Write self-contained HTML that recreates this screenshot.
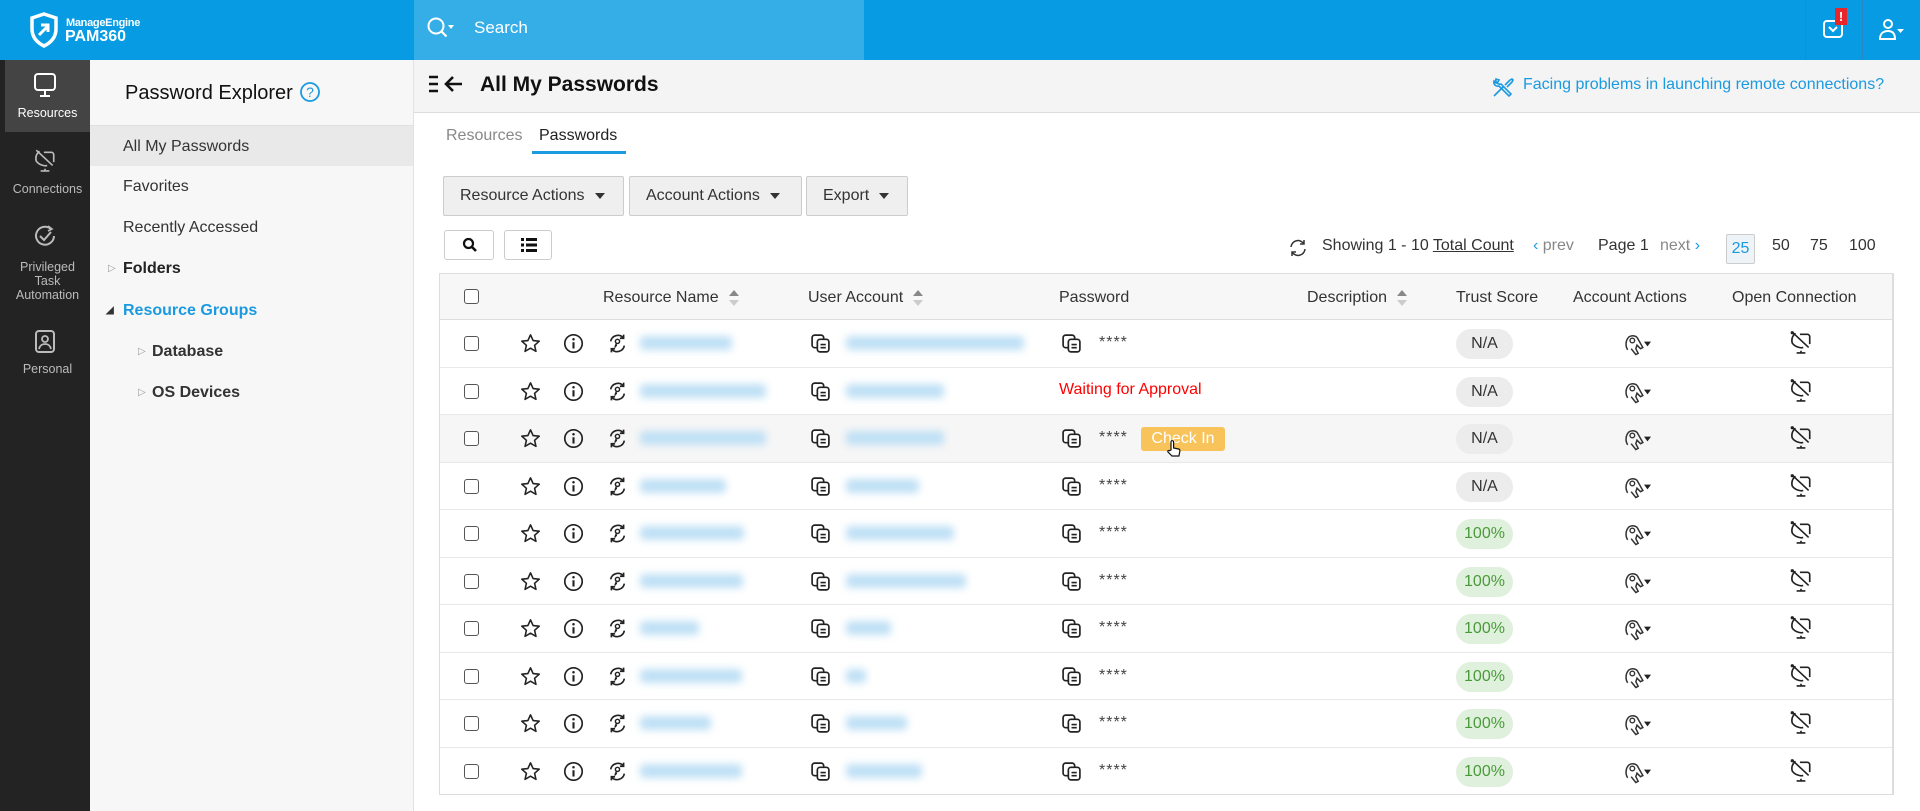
<!DOCTYPE html>
<html><head><meta charset="utf-8"><style>
*{box-sizing:border-box;margin:0;padding:0}
body{width:1920px;height:811px;overflow:hidden;font-family:"Liberation Sans",sans-serif;color:#222;background:#fff;position:relative}
.a{position:absolute}
#hdr{left:0;top:0;width:1920px;height:60px;background:#069be3}
#srch{left:414px;top:0;width:450px;height:60px;background:#35aee8;color:#fff;font-size:17px}
#nav{left:0;top:60px;width:90px;height:751px;background:#232323}
.ni{position:absolute;left:5px;width:85px;text-align:center;color:#bbb;font-size:12.5px;line-height:14px}
#sec{left:90px;top:60px;width:324px;height:751px;background:#f7f7f7;border-right:1px solid #e2e2e2}
.si{position:absolute;left:0;width:323px;height:41px;line-height:41px;padding-left:33px;font-size:16px;color:#333}
#mh{left:414px;top:60px;width:1506px;height:53px;background:#f4f4f4;border-bottom:1px solid #ddd}
.btn{position:absolute;top:176px;height:40px;background:#efefef;border:1px solid #ccc;border-radius:2px;font-size:16px;color:#333;line-height:38px;padding-left:16px}
.caret{display:inline-block;width:0;height:0;border-left:5px solid transparent;border-right:5px solid transparent;border-top:6px solid #333;margin-left:10px;vertical-align:middle}
.sb{position:absolute;top:230px;height:30px;border:1px solid #ccc;border-radius:3px;background:#fff}
#tbl{left:439px;top:273px;width:1455px;height:522px;border:1px solid #ddd;border-right:2px solid #ddd}
.th{position:absolute;top:0;left:0;width:1452px;height:46px;background:#f7f7f7;border-bottom:1px solid #ddd;font-size:16px;color:#333}
.th span{position:absolute;top:15px}
.row{position:absolute;left:0;width:1452px;height:47.5px;border-bottom:1px solid #e8e8e8}
.row>*{position:absolute}
.cb{left:24px;top:16px;width:15px;height:15px;border:1.5px solid #555;border-radius:3px;background:#fff}
.bl{top:16px;height:14px;background:#bfe0f5;filter:blur(4px);border-radius:4px}
.pw{left:659px;top:14px;font-size:16px;color:#444;letter-spacing:1px}
.bd{left:1016px;top:9px;width:57px;height:30px;border-radius:15px;background:#ececec;text-align:center;line-height:30px;font-size:16px;color:#333}
.bd.g{background:#dff1dc;color:#4a9a3a}
.k{left:1183px;top:12px}
.c{left:1349px;top:10px}
.sort{display:inline-block;position:relative;width:10px;height:16px;vertical-align:middle;margin-left:10px}
.sort:before{content:"";position:absolute;top:0;left:0;border-left:5px solid transparent;border-right:5px solid transparent;border-bottom:6px solid #888}
.sort:after{content:"";position:absolute;bottom:0;left:0;border-left:5px solid transparent;border-right:5px solid transparent;border-top:6px solid #ccc}
</style></head><body>
<svg width="0" height="0" style="position:absolute"><defs>
<symbol id="star" viewBox="0 0 20 20"><path d="M10 1.8l2.5 5.4 5.8.6-4.4 3.9 1.3 5.8L10 14.5l-5.2 3 1.3-5.8L1.7 7.8l5.8-.6z" fill="none" stroke="#222" stroke-width="1.5" stroke-linejoin="round"/></symbol>
<symbol id="info" viewBox="0 0 20 20"><circle cx="10" cy="10" r="8.3" fill="none" stroke="#222" stroke-width="1.6"/><circle cx="10" cy="6" r="1.2" fill="#222"/><path d="M10 8.8v6" stroke="#222" stroke-width="2"/></symbol>
<symbol id="sync" viewBox="0 0 20 20"><path d="M3.5 8a7 7 0 0 1 12-3.5M16.5 12a7 7 0 0 1-12 3.5" fill="none" stroke="#222" stroke-width="1.6"/><path d="M15.8 1.5v3.5h-3.5M4.2 18.5V15h3.5" fill="none" stroke="#222" stroke-width="1.6"/><circle cx="10" cy="8" r="2" fill="none" stroke="#222" stroke-width="1.4"/><path d="M9 9.8l-1.5 4M8 12h1.5" stroke="#222" stroke-width="1.4"/></symbol>
<symbol id="copy" viewBox="0 0 20 20"><rect x="2" y="2" width="11" height="12" rx="2.5" fill="#fff" stroke="#222" stroke-width="1.6"/><rect x="7" y="6" width="11" height="12" rx="2.5" fill="#fff" stroke="#222" stroke-width="1.6"/><path d="M10 11h5M10 14h5" stroke="#222" stroke-width="1.5"/></symbol>
<symbol id="key" viewBox="0 0 24 20"><path d="M4 15c-2-3-2-8 1-11 3-2 7-1 8 2l4 7-2 1-3-3-1 3 2 4-2 1-4-5" fill="none" stroke="#333" stroke-width="1.3"/><circle cx="8" cy="7" r="2" fill="none" stroke="#333" stroke-width="1.2"/><path d="M18 8h6l-3 4z" fill="#222"/></symbol>
<symbol id="conn" viewBox="0 0 22 22"><path d="M3 2l15 14M6 3c-3 2-4 6-3 9 2 3 7 5 10 4" fill="none" stroke="#222" stroke-width="1.5"/><path d="M10 4h7c1 0 2 1 2 2v7M11 19v2M7 21h8" fill="none" stroke="#222" stroke-width="1.5"/><circle cx="3" cy="2.5" r="1.5" fill="#222"/></symbol>
</defs></svg>

<div id="hdr" class="a">
 <svg class="a" style="left:28px;top:12px" width="32" height="36" viewBox="0 0 32 36"><path d="M16 2l12 4v11c0 9-6 14-12 17C10 31 4 26 4 17V6z" fill="none" stroke="#fff" stroke-width="3.5"/><path d="M11 23l9-9M13 13h7v7" fill="none" stroke="#fff" stroke-width="3"/></svg>
 <div class="a" style="left:66px;top:17px;color:#fff;font-size:11px;font-weight:bold;letter-spacing:-0.3px">ManageEngine</div>
 <div class="a" style="left:65px;top:28px;color:#fff;font-size:16px;font-weight:bold">PAM360</div>
</div>
<div id="srch" class="a">
 <svg class="a" style="left:12px;top:16px" width="30" height="26" viewBox="0 0 30 26"><circle cx="10" cy="10" r="7.5" fill="none" stroke="#fff" stroke-width="2"/><path d="M15.5 15.5l5 5" stroke="#fff" stroke-width="2.2"/><path d="M22 9h6l-3 4z" fill="#fff"/></svg>
 <span class="a" style="left:60px;top:18px">Search</span>
</div>
<div class="a" style="left:1805px;top:0;width:1px;height:60px;background:#2a87c4"></div>
<div class="a" style="left:1862px;top:0;width:1px;height:60px;background:#2a87c4"></div>
<svg class="a" style="left:1822px;top:15px" width="22" height="24" viewBox="0 0 22 24"><rect x="2" y="6" width="18" height="16" rx="3" fill="none" stroke="#fff" stroke-width="2"/><path d="M7 12l4 4 4-4" fill="none" stroke="#fff" stroke-width="2"/></svg>
<div class="a" style="left:1835px;top:8px;width:12px;height:17px;background:#e8262a;color:#fff;font-size:13px;font-weight:bold;text-align:center;line-height:17px">!</div>
<svg class="a" style="left:1878px;top:18px" width="28" height="24" viewBox="0 0 28 24"><circle cx="10" cy="6" r="4" fill="none" stroke="#fff" stroke-width="2"/><path d="M2 21c0-5 3-8 8-8s7 3 7 8z" fill="none" stroke="#fff" stroke-width="2"/><path d="M19 11h7l-3.5 4z" fill="#fff"/></svg>

<div id="nav" class="a">
 <div class="a" style="left:5px;top:0;width:85px;height:72px;background:#444"></div>
 <svg class="a" style="left:33px;top:12px" width="24" height="26" viewBox="0 0 24 26"><rect x="2" y="2" width="20" height="16" rx="3" fill="none" stroke="#fff" stroke-width="2"/><path d="M12 18v5M7 24h10" stroke="#fff" stroke-width="2"/></svg>
 <div class="ni" style="top:46px;color:#fff">Resources</div>
 <svg class="a" style="left:33px;top:87px" width="24" height="26" viewBox="0 0 22 22"><path d="M3 2l15 14M6 3c-3 2-4 6-3 9 2 3 7 5 10 4" fill="none" stroke="#bbb" stroke-width="1.5"/><path d="M10 4h7c1 0 2 1 2 2v7M11 19v2M7 21h8" fill="none" stroke="#bbb" stroke-width="1.5"/></svg>
 <div class="ni" style="top:122px">Connections</div>
 <svg class="a" style="left:33px;top:163px" width="24" height="26" viewBox="0 0 24 26"><path d="M18 6A9 9 0 1 0 21 13" fill="none" stroke="#bbb" stroke-width="2"/><path d="M7 13l4 4 7-8" fill="none" stroke="#bbb" stroke-width="2"/><path d="M15 3l4 3-4 2" fill="none" stroke="#bbb" stroke-width="1.6"/></svg>
 <div class="ni" style="top:200px">Privileged<br>Task<br>Automation</div>
 <svg class="a" style="left:33px;top:268px" width="24" height="26" viewBox="0 0 24 26"><rect x="3" y="3" width="18" height="21" rx="3" fill="none" stroke="#bbb" stroke-width="2"/><circle cx="12" cy="11" r="3" fill="none" stroke="#bbb" stroke-width="1.8"/><path d="M6 21c1-4 3-5 6-5s5 1 6 5" fill="none" stroke="#bbb" stroke-width="1.8"/></svg>
 <div class="ni" style="top:302px">Personal</div>
</div>

<div id="sec" class="a">
 <div class="a" style="left:35px;top:22px;font-size:20px;color:#111">Password Explorer</div>
 <svg class="a" style="left:209px;top:21px" width="22" height="22" viewBox="0 0 22 22"><circle cx="11" cy="11" r="9" fill="none" stroke="#1a9ae0" stroke-width="1.8"/><text x="11" y="16" text-anchor="middle" font-size="14" fill="#1a9ae0" font-family="Liberation Sans">?</text></svg>
 <div class="si" style="top:65px;background:#e9e9e9;border-top:1px solid #e0e0e0">All My Passwords</div>
 <div class="si" style="top:106px">Favorites</div>
 <div class="si" style="top:147px">Recently Accessed</div>
 <div class="si" style="top:188px;font-weight:bold;color:#222"><span style="position:absolute;left:18px;color:#999;font-size:10px;font-weight:normal">&#9655;</span>Folders</div>
 <div class="si" style="top:230px;font-weight:bold;color:#1a9ae0"><span style="position:absolute;left:16px;color:#333;font-size:10px">&#9698;</span>Resource Groups</div>
 <div class="si" style="top:271px;padding-left:62px;font-weight:bold;color:#333"><span style="position:absolute;left:48px;color:#999;font-size:10px;font-weight:normal">&#9655;</span>Database</div>
 <div class="si" style="top:312px;padding-left:62px;font-weight:bold;color:#333"><span style="position:absolute;left:48px;color:#999;font-size:10px;font-weight:normal">&#9655;</span>OS Devices</div>
</div>

<div id="mh" class="a">
 <svg class="a" style="left:14px;top:14px" width="42" height="22" viewBox="0 0 42 22"><path d="M1 3h9M1 10h9M1 17h9" stroke="#111" stroke-width="2.6"/><path d="M34 10H18M25 3l-7 7 7 7" fill="none" stroke="#111" stroke-width="2.6"/></svg>
 <div class="a" style="left:66px;top:13px;font-size:21px;font-weight:bold;color:#111">All My Passwords</div>
 <svg class="a" style="left:1077px;top:15px" width="24" height="24" viewBox="0 0 24 24"><path d="M3 21l9-9M5 4a4 4 0 0 0 5 5l10 10-2 2L8 11a4 4 0 0 1-5-5l2 2 2-1 1-2z" fill="none" stroke="#1a9ae0" stroke-width="1.6"/><path d="M14 10l5-5 2-1 1 1-1 2-5 5" fill="none" stroke="#1a9ae0" stroke-width="1.6"/></svg>
 <div class="a" style="left:1109px;top:16px;font-size:16px;color:#1a9ae0">Facing problems in launching remote connections?</div>
</div>

<div class="a" style="left:446px;top:127px;font-size:16px;color:#888">Resources</div>
<div class="a" style="left:539px;top:127px;font-size:16px;color:#222">Passwords</div>
<div class="a" style="left:532px;top:151px;width:94px;height:3px;background:#1a9ae0"></div>

<div class="btn" style="left:443px;width:181px">Resource Actions<span class="caret"></span></div>
<div class="btn" style="left:629px;width:173px">Account Actions<span class="caret"></span></div>
<div class="btn" style="left:806px;width:102px">Export<span class="caret"></span></div>
<div class="sb" style="left:444px;width:50px"><svg class="a" style="left:17px;top:6px" width="16" height="16" viewBox="0 0 16 16"><circle cx="6.5" cy="6.5" r="4.5" fill="none" stroke="#111" stroke-width="2.2"/><path d="M10 10l4 4" stroke="#111" stroke-width="2.6"/></svg></div>
<div class="sb" style="left:504px;width:48px"><svg class="a" style="left:16px;top:7px" width="16" height="14" viewBox="0 0 16 14"><path d="M0 1.5h3M5 1.5h11M0 7h3M5 7h11M0 12.5h3M5 12.5h11" stroke="#111" stroke-width="3"/></svg></div>

<svg class="a" style="left:1288px;top:238px" width="20" height="20" viewBox="0 0 20 20"><path d="M3 9a7 7 0 0 1 13-3M17 11a7 7 0 0 1-13 3" fill="none" stroke="#333" stroke-width="1.5"/><path d="M16 2v4h-4M4 18v-4h4" fill="none" stroke="#333" stroke-width="1.5"/></svg>
<div class="a" style="left:1322px;top:237px;font-size:16px;color:#333">Showing 1 - 10 <span style="text-decoration:underline">Total Count</span></div>
<div class="a" style="left:1533px;top:237px;font-size:16px;color:#888"><span style="color:#1a9ae0">&#8249;</span> prev</div>
<div class="a" style="left:1598px;top:237px;font-size:16px;color:#333">Page 1</div>
<div class="a" style="left:1660px;top:237px;font-size:16px;color:#888">next <span style="color:#1a9ae0">&#8250;</span></div>
<div class="a" style="left:1726px;top:234px;width:29px;height:30px;border:1px solid #ccc;background:#eef3f7;border-radius:2px;color:#1a9ae0;font-size:16px;text-align:center;line-height:28px">25</div>
<div class="a" style="left:1772px;top:237px;font-size:16px;color:#333">50</div>
<div class="a" style="left:1810px;top:237px;font-size:16px;color:#333">75</div>
<div class="a" style="left:1849px;top:237px;font-size:16px;color:#333">100</div>

<div id="tbl" class="a">
 <div class="th">
  <div class="cb" style="top:15px;left:24px;position:absolute"></div>
  <span style="left:163px">Resource Name<i class="sort"></i></span>
  <span style="left:368px">User Account<i class="sort"></i></span>
  <span style="left:619px">Password</span>
  <span style="left:867px">Description<i class="sort"></i></span>
  <span style="left:1016px">Trust Score</span>
  <span style="left:1133px">Account Actions</span>
  <span style="left:1292px">Open Connection</span>
 </div>
 <div style="position:absolute;top:46px;left:0;width:1452px">
 <div class="row" style="top:0"><div class="cb"></div><svg style="left:80px;top:13px" width="21" height="21"><use href="#star"/></svg><svg style="left:123px;top:13px" width="21" height="21"><use href="#info"/></svg><svg style="left:167px;top:13px" width="21" height="21"><use href="#sync"/></svg><div class="bl" style="left:200px;width:92px"></div><svg style="left:370px;top:13px" width="21" height="21"><use href="#copy"/></svg><div class="bl" style="left:406px;width:178px"></div><svg style="left:621px;top:13px" width="21" height="21"><use href="#copy"/></svg><div class="pw">****</div><div class="bd">N/A</div><svg class="k" width="28" height="24"><use href="#key"/></svg><svg class="c" width="24" height="24"><use href="#conn"/></svg></div>
 <div class="row" style="top:47.5px"><div class="cb"></div><svg style="left:80px;top:13px" width="21" height="21"><use href="#star"/></svg><svg style="left:123px;top:13px" width="21" height="21"><use href="#info"/></svg><svg style="left:167px;top:13px" width="21" height="21"><use href="#sync"/></svg><div class="bl" style="left:200px;width:126px"></div><svg style="left:370px;top:13px" width="21" height="21"><use href="#copy"/></svg><div class="bl" style="left:406px;width:98px"></div><div style="left:619px;top:13px;font-size:16px;color:#f00">Waiting for Approval</div><div class="bd">N/A</div><svg class="k" width="28" height="24"><use href="#key"/></svg><svg class="c" width="24" height="24"><use href="#conn"/></svg></div>
 <div class="row" style="top:95px;background:#f6f6f6"><div class="cb"></div><svg style="left:80px;top:13px" width="21" height="21"><use href="#star"/></svg><svg style="left:123px;top:13px" width="21" height="21"><use href="#info"/></svg><svg style="left:167px;top:13px" width="21" height="21"><use href="#sync"/></svg><div class="bl" style="left:200px;width:126px"></div><svg style="left:370px;top:13px" width="21" height="21"><use href="#copy"/></svg><div class="bl" style="left:406px;width:98px"></div><svg style="left:621px;top:13px" width="21" height="21"><use href="#copy"/></svg><div class="pw">****</div><div style="left:701px;top:12px;width:84px;height:24px;background:#f7c35a;border-radius:3px;color:#fff;font-size:16px;text-align:center;line-height:24px">Check In</div><svg style="left:726px;top:24px" width="16" height="20" viewBox="0 0 16 20"><path d="M5 11V3a1.3 1.3 0 0 1 2.6 0v6l5 1c1 .3 1.4 1 1.3 2l-1 5H6L2 13c-.7-1 .5-2 1.5-1.3z" fill="#fff" stroke="#111" stroke-width="1.2"/></svg><div class="bd">N/A</div><svg class="k" width="28" height="24"><use href="#key"/></svg><svg class="c" width="24" height="24"><use href="#conn"/></svg></div>
 <div class="row" style="top:142.5px"><div class="cb"></div><svg style="left:80px;top:13px" width="21" height="21"><use href="#star"/></svg><svg style="left:123px;top:13px" width="21" height="21"><use href="#info"/></svg><svg style="left:167px;top:13px" width="21" height="21"><use href="#sync"/></svg><div class="bl" style="left:200px;width:86px"></div><svg style="left:370px;top:13px" width="21" height="21"><use href="#copy"/></svg><div class="bl" style="left:406px;width:73px"></div><svg style="left:621px;top:13px" width="21" height="21"><use href="#copy"/></svg><div class="pw">****</div><div class="bd">N/A</div><svg class="k" width="28" height="24"><use href="#key"/></svg><svg class="c" width="24" height="24"><use href="#conn"/></svg></div>
 <div class="row" style="top:190px"><div class="cb"></div><svg style="left:80px;top:13px" width="21" height="21"><use href="#star"/></svg><svg style="left:123px;top:13px" width="21" height="21"><use href="#info"/></svg><svg style="left:167px;top:13px" width="21" height="21"><use href="#sync"/></svg><div class="bl" style="left:200px;width:104px"></div><svg style="left:370px;top:13px" width="21" height="21"><use href="#copy"/></svg><div class="bl" style="left:406px;width:108px"></div><svg style="left:621px;top:13px" width="21" height="21"><use href="#copy"/></svg><div class="pw">****</div><div class="bd g">100%</div><svg class="k" width="28" height="24"><use href="#key"/></svg><svg class="c" width="24" height="24"><use href="#conn"/></svg></div>
 <div class="row" style="top:237.5px"><div class="cb"></div><svg style="left:80px;top:13px" width="21" height="21"><use href="#star"/></svg><svg style="left:123px;top:13px" width="21" height="21"><use href="#info"/></svg><svg style="left:167px;top:13px" width="21" height="21"><use href="#sync"/></svg><div class="bl" style="left:200px;width:103px"></div><svg style="left:370px;top:13px" width="21" height="21"><use href="#copy"/></svg><div class="bl" style="left:406px;width:120px"></div><svg style="left:621px;top:13px" width="21" height="21"><use href="#copy"/></svg><div class="pw">****</div><div class="bd g">100%</div><svg class="k" width="28" height="24"><use href="#key"/></svg><svg class="c" width="24" height="24"><use href="#conn"/></svg></div>
 <div class="row" style="top:285px"><div class="cb"></div><svg style="left:80px;top:13px" width="21" height="21"><use href="#star"/></svg><svg style="left:123px;top:13px" width="21" height="21"><use href="#info"/></svg><svg style="left:167px;top:13px" width="21" height="21"><use href="#sync"/></svg><div class="bl" style="left:200px;width:59px"></div><svg style="left:370px;top:13px" width="21" height="21"><use href="#copy"/></svg><div class="bl" style="left:406px;width:45px"></div><svg style="left:621px;top:13px" width="21" height="21"><use href="#copy"/></svg><div class="pw">****</div><div class="bd g">100%</div><svg class="k" width="28" height="24"><use href="#key"/></svg><svg class="c" width="24" height="24"><use href="#conn"/></svg></div>
 <div class="row" style="top:332.5px"><div class="cb"></div><svg style="left:80px;top:13px" width="21" height="21"><use href="#star"/></svg><svg style="left:123px;top:13px" width="21" height="21"><use href="#info"/></svg><svg style="left:167px;top:13px" width="21" height="21"><use href="#sync"/></svg><div class="bl" style="left:200px;width:102px"></div><svg style="left:370px;top:13px" width="21" height="21"><use href="#copy"/></svg><div class="bl" style="left:406px;width:20px"></div><svg style="left:621px;top:13px" width="21" height="21"><use href="#copy"/></svg><div class="pw">****</div><div class="bd g">100%</div><svg class="k" width="28" height="24"><use href="#key"/></svg><svg class="c" width="24" height="24"><use href="#conn"/></svg></div>
 <div class="row" style="top:380px"><div class="cb"></div><svg style="left:80px;top:13px" width="21" height="21"><use href="#star"/></svg><svg style="left:123px;top:13px" width="21" height="21"><use href="#info"/></svg><svg style="left:167px;top:13px" width="21" height="21"><use href="#sync"/></svg><div class="bl" style="left:200px;width:71px"></div><svg style="left:370px;top:13px" width="21" height="21"><use href="#copy"/></svg><div class="bl" style="left:406px;width:61px"></div><svg style="left:621px;top:13px" width="21" height="21"><use href="#copy"/></svg><div class="pw">****</div><div class="bd g">100%</div><svg class="k" width="28" height="24"><use href="#key"/></svg><svg class="c" width="24" height="24"><use href="#conn"/></svg></div>
 <div class="row" style="top:427.5px;border-bottom:none"><div class="cb"></div><svg style="left:80px;top:13px" width="21" height="21"><use href="#star"/></svg><svg style="left:123px;top:13px" width="21" height="21"><use href="#info"/></svg><svg style="left:167px;top:13px" width="21" height="21"><use href="#sync"/></svg><div class="bl" style="left:200px;width:102px"></div><svg style="left:370px;top:13px" width="21" height="21"><use href="#copy"/></svg><div class="bl" style="left:406px;width:76px"></div><svg style="left:621px;top:13px" width="21" height="21"><use href="#copy"/></svg><div class="pw">****</div><div class="bd g">100%</div><svg class="k" width="28" height="24"><use href="#key"/></svg><svg class="c" width="24" height="24"><use href="#conn"/></svg></div>
 </div>
</div>
</body></html>
